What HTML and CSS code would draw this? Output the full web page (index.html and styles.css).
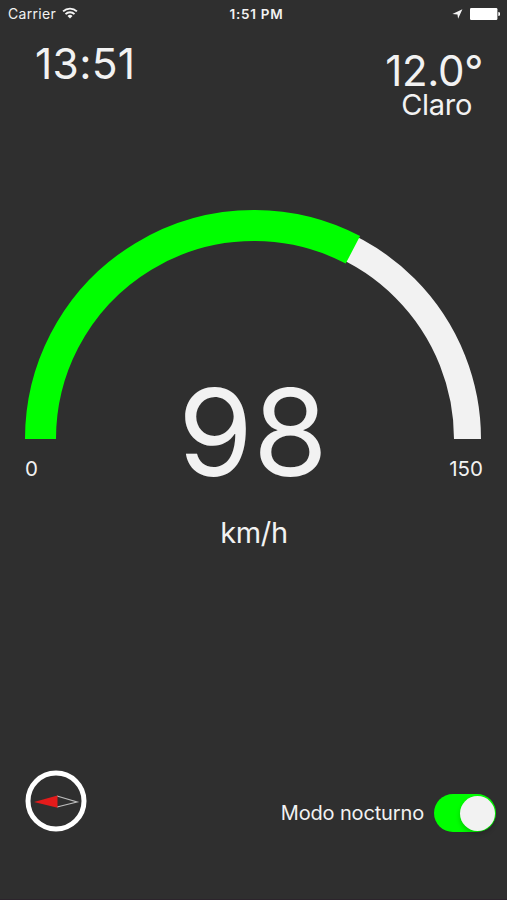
FILE: index.html
```html
<!DOCTYPE html>
<html lang="es">
<head>
    <meta charset="UTF-8">
    <meta name="viewport" content="width=device-width, initial-scale=1.0">
    <title>Velocímetro</title>
    <link rel="stylesheet" href="styles.css">
</head>
<body>
    <div class="status-bar">
        <div class="status-left">
            <span class="carrier">Carrier</span>
            <svg class="wifi" width="16" height="12" viewBox="0 0 16 12">
                <path d="M1.1 4.4a10 10 0 0 1 13.8 0M3.5 7.1a6.5 6.5 0 0 1 9 0" fill="none" stroke="#f4f4f4" stroke-width="1.9"/>
                <path d="M5.5 9a3.6 3.6 0 0 1 5 0L8 11.6z" fill="#f4f4f4"/>
            </svg>
        </div>
        <span class="status-time">1:51 PM</span>
        <div class="status-right">
            <svg width="11" height="10" viewBox="0 0 11 10">
                <path d="M10.4 0.2L6.1 9.7L5.5 5.4L0.4 5z" fill="#f4f4f4"/>
            </svg>
            <svg width="30" height="12" viewBox="0 0 30 12">
                <rect x="0" y="0" width="27.4" height="12" rx="1.2" fill="#ffffff"/>
                <path d="M28.3 4a2 2 0 0 1 0 4z" fill="#ffffff"/>
            </svg>
        </div>
    </div>

    <header>
        <div class="clock">13:51</div>
        <div class="weather">
            <div class="temperature">12.0°</div>
            <div class="condition">Claro</div>
        </div>
    </header>

    <main class="speedometer">
        <svg class="gauge" width="458" height="229" viewBox="0 0 458 229">
            <path d="M15.5 229a213.5 213.5 0 0 1 427 0" fill="none" stroke="#f2f2f2" stroke-width="27"/>
            <path d="M15.5 229A213.5 213.5 0 0 1 327.9 39.8" fill="none" stroke="#00ff00" stroke-width="31"/>
        </svg>
        <div class="speed">98</div>
        <div class="limits">
            <span>0</span>
            <span>150</span>
        </div>
        <div class="unit">km/h</div>
    </main>

    <footer>
        <svg class="compass" width="62" height="62" viewBox="0 0 62 62">
            <circle cx="31" cy="31" r="28" fill="none" stroke="#ffffff" stroke-width="5"/>
            <path d="M32 26L52 32L32 37" fill="none" stroke="#bdbdbd" stroke-width="1.2"/>
            <path d="M32.5 25.5V37.8L9 32z" fill="#e41b1b"/>
        </svg>
        <div class="night-mode">
            <span class="night-label">Modo nocturno</span>
            <div class="switch"><div class="knob"></div></div>
        </div>
    </footer>
</body>
</html>
```
FILE: styles.css
```css
* {
    box-sizing: border-box;
}

body {
    margin: 0;
    height: 900px;
    display: flex;
    flex-direction: column;
    background-color: #2f2f2f;
    border-bottom: 1px solid #2c242c;
    color: #f2f2f2;
    font-family: Inter, "Liberation Sans", sans-serif;
    font-weight: 400;
    overflow: hidden;
}

.status-bar {
    display: grid;
    grid-template-columns: 1fr auto 1fr;
    align-items: center;
    height: 27px;
    padding: 0 7px 0 8px;
    font-size: 14px;
}

.status-left {
    display: flex;
    align-items: center;
    gap: 6px;
}

.carrier {
    letter-spacing: 0.3px;
}

.wifi {
    margin-top: -2px;
}

.status-time {
    margin-left: 5px;
    font-size: 13.5px;
    font-weight: 600;
    letter-spacing: 0.75px;
}

.status-right {
    display: flex;
    justify-content: flex-end;
    align-items: center;
    gap: 7px;
}

header {
    display: flex;
    justify-content: space-between;
    height: 183px;
    padding: 12px 24px 0 35px;
}

.clock {
    font-size: 42.5px;
    line-height: 50px;
    letter-spacing: 0.3px;
}

.weather {
    padding-top: 12px;
    text-align: right;
}

.temperature {
    font-size: 42px;
    line-height: 40px;
    letter-spacing: -0.3px;
}

.condition {
    padding-right: 11px;
    font-size: 29px;
    line-height: 28px;
    letter-spacing: -0.3px;
}

.speedometer {
    display: flex;
    flex-direction: column;
    width: 458px;
    margin-left: 25px;
}

.gauge {
    display: block;
}

.speed {
    height: 120px;
    margin-top: -67px;
    padding-right: 2px;
    font-size: 121px;
    line-height: 120px;
    text-align: center;
}

.limits {
    display: flex;
    justify-content: space-between;
    margin-top: -36px;
    font-size: 20.5px;
    line-height: 26px;
}

.unit {
    margin-top: 33px;
    font-size: 29px;
    line-height: 36px;
    letter-spacing: -0.4px;
    text-align: center;
}

footer {
    display: flex;
    justify-content: space-between;
    align-items: flex-start;
    margin-top: auto;
    height: 129px;
    padding: 0 11px 0 25px;
}

.night-mode {
    display: flex;
    align-items: center;
    gap: 10px;
    margin-top: 24px;
}

.night-label {
    font-size: 20px;
    letter-spacing: -0.15px;
}

.switch {
    display: flex;
    justify-content: flex-end;
    align-items: center;
    width: 62px;
    height: 38px;
    padding-right: 1px;
    border-radius: 19px;
    background-color: #00ff00;
}

.knob {
    width: 35px;
    height: 35px;
    border-radius: 50%;
    background-color: #f2f2f2;
    box-shadow: 0 3px 5px rgba(0, 0, 0, 0.2);
}
```
